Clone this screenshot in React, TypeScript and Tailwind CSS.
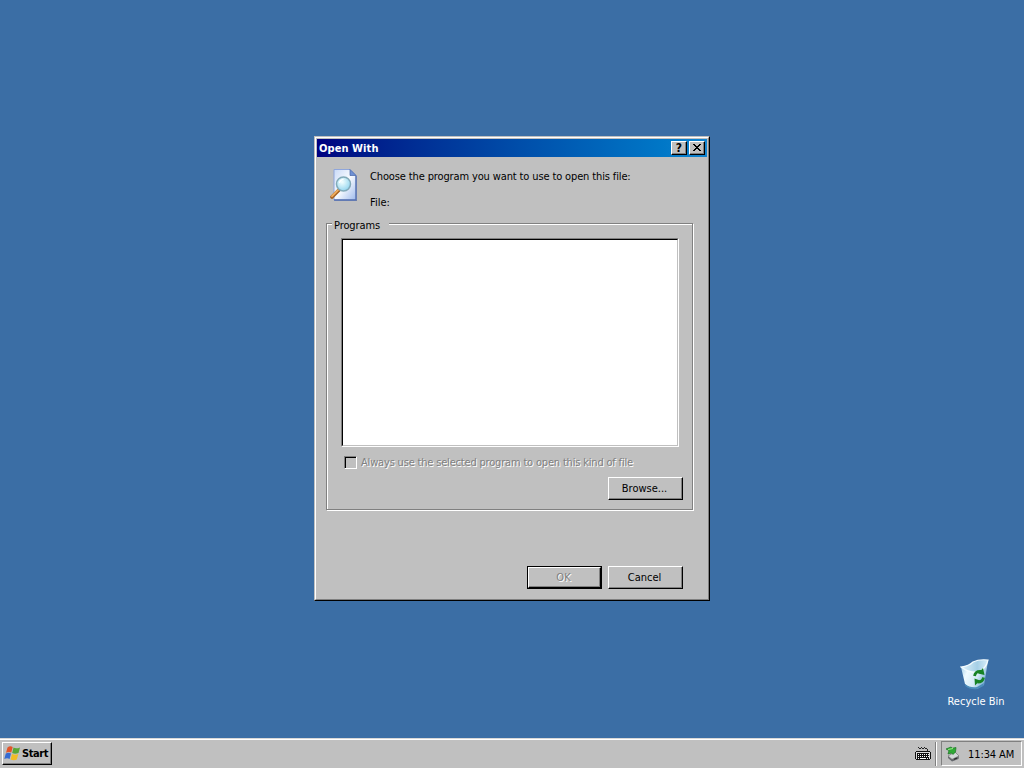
import type { ReactNode } from 'react';

const raised =
  'bg-[#c0c0c0] border border-t-white border-l-white border-r-black border-b-black shadow-[inset_-1px_-1px_0_#808080]';

function PageSearchIcon() {
  return (
    <svg width="30" height="34" viewBox="0 0 30 34" className="block">
      <defs>
        <linearGradient id="page" x1="0" y1="0" x2="1" y2="1">
          <stop offset="0" stopColor="#c9daf8" />
          <stop offset="0.5" stopColor="#f8fbff" />
          <stop offset="1" stopColor="#9db9ec" />
        </linearGradient>
        <radialGradient id="lens" cx="0.4" cy="0.35" r="0.7">
          <stop offset="0" stopColor="#f4ffff" />
          <stop offset="1" stopColor="#8ed3ee" />
        </radialGradient>
      </defs>
      <path d="M5 3h17l5 5v25H5z" fill="#6f7890" opacity="0.7" />
      <path d="M4 1.500h16l6 6V32H4z" fill="url(#page)" stroke="#8fa6dc" />
      <path d="M26 8v24H4" fill="none" stroke="#5570b0" strokeWidth="1.3" />
      <path d="M20 1.500v6h6z" fill="#6f91d5" stroke="#4564a8" strokeWidth="0.7" />
      <path d="M8.500 22.500L2 29" stroke="#a76424" strokeWidth="3.6" strokeLinecap="round" />
      <path d="M8 22.200L2 28.200" stroke="#efae60" strokeWidth="1.9" strokeLinecap="round" />
      <circle cx="13.500" cy="16" r="7" fill="url(#lens)" stroke="#83aab9" strokeWidth="1.500" />
      <path d="M9.500 15a4.500 4.500 0 0 1 4-3.700" fill="none" stroke="#fff" strokeWidth="1.3" />
    </svg>
  );
}

function RecycleBinIcon() {
  return (
    <svg width="32" height="32" viewBox="0 0 32 32" className="block">
      <defs>
        <linearGradient id="bin" x1="0" y1="0" x2="1" y2="0.5">
          <stop offset="0" stopColor="#8fc3e2" />
          <stop offset="0.35" stopColor="#eefaff" />
          <stop offset="0.7" stopColor="#d3ebf7" />
          <stop offset="1" stopColor="#7fb3d6" />
        </linearGradient>
        <linearGradient id="rim" x1="0" y1="0" x2="1" y2="0">
          <stop offset="0" stopColor="#e2f4fc" />
          <stop offset="0.6" stopColor="#a5cfe6" />
          <stop offset="1" stopColor="#d7eef9" />
        </linearGradient>
      </defs>
      <path d="M1 9l4 17q5 5 12 5l7-4 4-24-9 4-8 2z" fill="url(#bin)" />
      <path d="M1 9q8-1 12-5 6-3 15-2-2 9-10 12-9 1-17-5z" fill="url(#rim)" stroke="#f4fcff" strokeWidth="1.2" />
      <path d="M5 26q5 4 12 3l7-4-.7 3-6 3q-7 1-12-3z" fill="#4c8dbb" />
      <g fill="none" stroke="#168325" strokeWidth="2.8">
        <path d="M14.500 18q1-5 6.500-4.500" />
        <path d="M23.500 19.500q-.5 4.500-6 4.500" />
      </g>
      <path d="M23 10l1.500 7-6.500-1.500zM15 27.500l-.5-7 5.500 2z" fill="#168325" />
    </svg>
  );
}

function FlagIcon() {
  return (
    <svg width="17" height="16" viewBox="0 0 17 16" className="block">
      <path d="M3.500 2.500Q6 .5 8.700 2L7.300 7.600Q4.800 6.200 2 7.700z" fill="#e35428" />
      <path d="M9.500 2.600q2.800 1.600 6.500-.2L14.500 8q-3.300 1.600-6.300 0z" fill="#58a735" />
      <path d="M1.800 8.500Q4.500 7 7 8.400L5.600 14Q3.200 12.500.3 14z" fill="#356bd2" />
      <path d="M8 8.900q2.900 1.500 6.300.1l-1.500 5.500q-3.200 1.400-6.200-.1z" fill="#f2bc25" />
    </svg>
  );
}

function KeyboardIcon() {
  return (
    <svg width="16" height="15" viewBox="0 0 16 15" className="block" shapeRendering="crispEdges">
      <path d="M3 1h1v1H3zM4 2h2v1H4zM6 1h1v1H6zM7 2h2v1H7zM9 1h1v1H9zM10 2h2v1h-2zM12 3h1v2h-1z" fill="#222" />
      <path d="M1 5h14v1h1v7h-1v1H1v-1H0V6h1z" fill="#111" />
      <path d="M1 6h14v1H1zM1 7h1v6H1zM14 7h1v6h-1z" fill="#ddd" />
      <path d="M3 8h1v1H3zM5 8h1v1H5zM7 8h1v1H7zM9 8h1v1H9zM11 8h1v1h-1zM13 8h1v1h-1zM3 10h1v1H3zM5 10h1v1H5zM7 10h1v1H7zM9 10h1v1H9zM11 10h1v1h-1zM13 10h1v1h-1zM3 12h1v1H3zM5 12h6v1H5zM12 12h1v1h-1z" fill="#fff" />
    </svg>
  );
}

function DeviceIcon() {
  return (
    <svg width="16" height="16" viewBox="0 0 16 16" className="block">
      <path d="M3 10l7-4 4 4-.5 3-6.500 2.500-4-3.500z" fill="#64676c" />
      <path d="M3 10l7-4 4 4-7 3.300z" fill="#d3d8da" stroke="#777" strokeWidth="0.6" />
      <path d="M9 13.300l3-1.200" stroke="#222" />
      <path d="M1 3l5-2 1.500 1.200L11 1.500 10.500 6 8 8.500 6.500 7 3 8l1-3.500z" fill="#2fa936" stroke="#187422" strokeWidth="0.7" />
      <path d="M3 3.500l5-1" stroke="#95ed83" />
    </svg>
  );
}

function PushButton({ children, isDefault, disabled }: { children: ReactNode; isDefault?: boolean; disabled?: boolean }) {
  const label = disabled ? 'text-[#808080] [text-shadow:1px_1px_0_#fff]' : '';
  return (
    <div className={isDefault ? 'h-[23px] w-[75px] border border-black' : 'h-[23px] w-[75px]'}>
      <button className={`${raised} flex h-full w-full items-center justify-center pt-px pr-[2px] ${label}`}>{children}</button>
    </div>
  );
}

function Dialog() {
  return (
    <section className="h-[465px] w-[396px] border border-t-[#c0c0c0] border-l-[#c0c0c0] border-r-black border-b-black bg-[#c0c0c0]">
      <div className="flex h-full w-full flex-col border border-t-white border-l-white border-r-[#808080] border-b-[#808080] p-px">
        <header className="flex h-[18px] shrink-0 items-center bg-linear-to-r from-[#000080] to-[#1084d0] pr-[2px] pl-[2px] text-white">
          <span className="flex-1 pt-px text-[11px] font-bold tracking-[0.08px]">Open With</span>
          <button className={`${raised} flex h-[14px] w-[16px] items-center justify-center text-[12px] font-bold text-black`}>?</button>
          <button className={`${raised} ml-[2px] flex h-[14px] w-[16px] items-start justify-center pt-[2px]`}>
            <svg width="8" height="7" viewBox="0 0 8 7" shapeRendering="crispEdges">
              <path d="M0 0h2v1H0zM6 0h2v1H6zM1 1h2v1H1zM5 1h2v1H5zM2 2h4v1H2zM3 3h2v1H3zM2 4h4v1H2zM1 5h2v1H1zM5 5h2v1H5zM0 6h2v1H0zM6 6h2v1H6z" />
            </svg>
          </button>
        </header>
        <div className="flex h-[66px] shrink-0 pt-[11px] pl-[13px]">
          <PageSearchIcon />
          <div className="flex flex-col pt-px pl-[10px] leading-[16px]">
            <span className="tracking-[-0.13px]">Choose the program you want to use to open this file:</span>
            <span className="mt-[10px]">File:</span>
          </div>
        </div>
        <fieldset className="ml-[9px] h-[287px] w-[367px] shrink-0 border border-[#808080] shadow-[1px_1px_0_#fff,inset_1px_1px_0_#fff]">
          <div className="flex flex-col">
            <span className="-mt-[5px] ml-[5px] h-[14px] w-[57px] bg-[#c0c0c0] pl-[2px] leading-[14px] tracking-[-0.1px]">Programs</span>
            <div className="mt-[5px] ml-[14px] h-[209px] w-[338px] border border-t-[#808080] border-l-[#808080] border-r-white border-b-white bg-white">
              <div className="h-full w-full border border-t-black border-l-black border-r-[#c0c0c0] border-b-[#c0c0c0]" />
            </div>
            <label className="mt-[8px] ml-[17px] flex h-[14px] items-center text-[#808080] [text-shadow:1px_1px_0_#fff]">
              <span className="h-[13px] w-[13px] border border-t-[#808080] border-l-[#808080] border-r-white border-b-white shadow-[inset_1px_1px_0_#000]" />
              <span className="ml-[4px] pt-[2px] tracking-[-0.18px]">Always use the selected program to open this kind of file</span>
            </label>
            <div className="mt-[8px] flex justify-end pr-[9px]">
              <PushButton>Browse...</PushButton>
            </div>
          </div>
        </fieldset>
        <footer className="mt-[56px] flex justify-end gap-[6px] pr-[24px]">
          <PushButton isDefault disabled>OK</PushButton>
          <PushButton>Cancel</PushButton>
        </footer>
      </div>
    </section>
  );
}

export default function App() {
  return (
    <div className="flex h-[768px] w-[1024px] flex-col overflow-hidden bg-[#3b6ea5] font-['DejaVu_Sans_Condensed','DejaVu_Sans',sans-serif] text-[11px] leading-[14px] text-black">
      <main className="flex min-h-0 flex-1 flex-col pt-[136px]">
        <div className="pl-[314px]">
          <Dialog />
        </div>
        <div className="mt-[57px] mr-[18px] flex w-[60px] flex-col items-center self-end text-white">
          <RecycleBinIcon />
          <span className="mt-[5px] whitespace-nowrap">Recycle Bin</span>
        </div>
      </main>
      <footer className="flex h-[30px] items-center border-t border-[#d8d8d8] bg-[#c0c0c0] pl-[2px] shadow-[inset_0_1px_0_#fff]">
        <button className={`${raised} mb-px flex h-[23px] w-[50px] items-center pl-px text-[11px] font-bold`}>
          <FlagIcon />
          <span className="ml-px pt-px tracking-[-0.4px]">Start</span>
        </button>
        <div className="flex-1" />
        <KeyboardIcon />
        <div className="ml-[4px] h-[24px] w-[2px] border-r border-l border-r-white border-l-[#808080]" />
        <div className="mr-[2px] ml-[4px] flex h-[25px] w-[81px] items-center border border-t-[#808080] border-l-[#808080] border-r-white border-b-white pl-[3px]">
          <DeviceIcon />
          <span className="ml-[7px] pt-[2px] whitespace-nowrap tracking-[-0.1px]">11:34 AM</span>
        </div>
      </footer>
    </div>
  );
}
